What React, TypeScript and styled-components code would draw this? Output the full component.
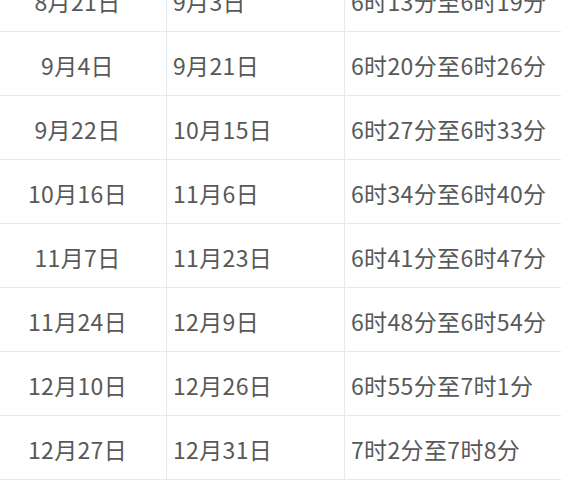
import React from "react";
import styled, { createGlobalStyle } from "styled-components";

const Global = createGlobalStyle`
  html, body { margin: 0; padding: 0; background: #fff; overflow: hidden; }
  body { font-family: "Noto Sans CJK SC", "Noto Sans", sans-serif; }
`;

const Viewport = styled.div`
  width: 561px;
  height: 486px;
  overflow: hidden;
`;

const Table = styled.table`
  border-collapse: collapse;
  margin: -33px 0 0 -12px;
  table-layout: fixed;
  width: 620px;
`;

const Cell = styled.td<{ $align: "center" | "left"; $w: number }>`
  width: ${(p) => p.$w}px;
  height: 64px;
  padding: 3px 0 0 ${(p) => (p.$align === "left" ? 6 : 0)}px;
  box-sizing: border-box;
  border: 1px solid #e6eaef;
  text-align: ${(p) => p.$align};
  vertical-align: middle;
  font-size: 23px;
  letter-spacing: 0.35px;
  color: #585858;
  white-space: nowrap;
  font-family: "Noto Sans CJK SC", "Noto Sans", sans-serif;
`;

const rows: [string, string, string][] = [
  ["8月21日", "9月3日", "6时13分至6时19分"],
  ["9月4日", "9月21日", "6时20分至6时26分"],
  ["9月22日", "10月15日", "6时27分至6时33分"],
  ["10月16日", "11月6日", "6时34分至6时40分"],
  ["11月7日", "11月23日", "6时41分至6时47分"],
  ["11月24日", "12月9日", "6时48分至6时54分"],
  ["12月10日", "12月26日", "6时55分至7时1分"],
  ["12月27日", "12月31日", "7时2分至7时8分"],
];

export default function App() {
  return (
    <Viewport>
      <Global />
      <Table>
        <tbody>
          {rows.map((r) => (
            <tr key={r[0]}>
              <Cell $align="center" $w={178}>{r[0]}</Cell>
              <Cell $align="left" $w={178}>{r[1]}</Cell>
              <Cell $align="left" $w={264}>{r[2]}</Cell>
            </tr>
          ))}
        </tbody>
      </Table>
    </Viewport>
  );
}
